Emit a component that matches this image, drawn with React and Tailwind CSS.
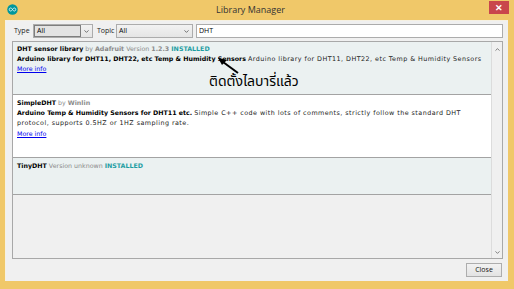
import { ChevronDown, ChevronUp } from 'lucide-react'

const listFont = { fontFamily: '"DejaVu Sans", Verdana, sans-serif' }
const uiFont = { fontFamily: '"Open Sans", "Noto Sans", sans-serif' }

function ArduinoLogo() {
  return (
    <svg width="11" height="11" viewBox="0 0 22 22">
      <circle cx="11" cy="11" r="10.5" fill="#00979c" />
      <path d="M4.5 11c0-2 1.3-3 2.8-3s2.6 1.2 3.7 3c1.1 1.8 2.2 3 3.7 3s2.8-1 2.8-3-1.3-3-2.8-3-2.6 1.2-3.7 3c-1.1 1.8-2.2 3-3.7 3S4.5 13 4.5 11z" fill="none" stroke="#fff" strokeWidth="1.6" />
    </svg>
  )
}

function Select({ value, width, focused }) {
  return (
    <div className={`h-[14px] ${width} border border-[#acacac] bg-gradient-to-b from-[#f2f2f2] to-[#e5e5e5] flex items-center`}>
      <div className={`flex-1 h-full flex items-center pl-[2px] text-[7px] text-black ${focused ? 'border border-[#7e7e7e] bg-[#e3e3e3]' : ''}`}>{value}</div>
      <div className="w-[11px] flex items-center justify-center text-[#444]">
        <ChevronDown size={7} strokeWidth={2.5} />
      </div>
    </div>
  )
}

// plain description text: wider, like hinted Verdana
function Plain({ children }) {
  return <span className="text-[6.4px] tracking-[0.45px] text-[#222]">{children}</span>
}

function App() {
  return (
    <div className="relative w-[514px] h-[289px] bg-[#f0c869] flex flex-col overflow-hidden">
      {/* title bar */}
      <div className="h-[20px] flex items-center relative shrink-0">
        <div className="ml-[7px] pb-[1px]"><ArduinoLogo /></div>
        <div className="flex-1 text-center text-[9px] text-[#333] pb-[1px] pr-[6px]" style={uiFont}>Library Manager</div>
        <div className="self-start mr-[5px] mt-[1px] w-[20px] h-[13px] bg-[#c9464c] flex items-center justify-center text-white text-[9px] font-bold" style={uiFont}>✕</div>
      </div>

      {/* content */}
      <div className="flex-1 ml-[5px] mr-[6px] mb-[8px] bg-[#f0f0f0] border-l border-t border-[#f6f1e2] flex flex-col pl-[6px] pr-[5px] pt-[3px] pb-[4px]" style={uiFont}>
        <div className="h-[14px] flex items-center">
          <span className="ml-[2px] w-[19px] text-[7px] text-[#222]">Type</span>
          <Select value="All" width="w-[60px]" focused />
          <span className="ml-[4px] w-[19px] text-[7px] text-[#222]">Topic</span>
          <Select value="All" width="w-[77px]" />
          <div className="ml-[3px] flex-1 h-[14px] bg-white border border-[#acacac] flex items-center pl-[2px] text-[7px] text-black">DHT</div>
        </div>

        <div className="mt-[3px] h-[218px] border border-[#a8a8a8] flex bg-[#f0f0f0]">
          <div className="flex-1 flex flex-col text-[6.3px] leading-[9.6px] overflow-hidden" style={listFont}>
            <div className="h-[53px] bg-[#ebf1f1] border-b border-[#a3a3a3] pl-[4px] pt-[2px] text-[#222]">
              <div className="whitespace-nowrap">
                <b className="text-black">DHT sensor library</b>{' '}
                <span className="text-[#8a8a8a]">by <b>Adafruit</b> Version <b>1.2.3</b></span>{' '}
                <b className="text-[#1f9ea3]">INSTALLED</b>
              </div>
              <div className="whitespace-nowrap">
                <b className="text-black">Arduino library for DHT11, DHT22, etc Temp &amp; Humidity Sensors</b>{' '}
                <Plain>Arduino library for DHT11, DHT22, etc Temp &amp; Humidity Sensors</Plain>
              </div>
              <div><span className="text-[#0000ee] underline">More info</span></div>
            </div>
            <div className="h-[63px] bg-white border-b border-[#a3a3a3] pl-[4px] pt-[3px] text-[#222]">
              <div className="whitespace-nowrap">
                <b className="text-black">SimpleDHT</b>{' '}
                <span className="text-[#8a8a8a]">by <b>Winlin</b></span>
              </div>
              <div className="whitespace-nowrap">
                <b className="text-black">Arduino Temp &amp; Humidity Sensors for DHT11 etc.</b>{' '}
                <Plain>Simple C++ code with lots of comments, strictly follow the standard DHT</Plain>
              </div>
              <div className="whitespace-nowrap"><Plain>protocol, supports 0.5HZ or 1HZ sampling rate.</Plain></div>
              <div><span className="text-[#0000ee] underline">More info</span></div>
            </div>
            <div className="h-[37px] bg-[#ebf1f1] border-b border-[#a3a3a3] pl-[4px] pt-[3px]">
              <div className="whitespace-nowrap">
                <b className="text-black">TinyDHT</b>{' '}
                <span className="text-[#8a8a8a]">Version unknown</span>{' '}
                <b className="text-[#1f9ea3]">INSTALLED</b>
              </div>
            </div>
          </div>
          <div className="w-[11px] border-l border-[#dcdcdc] bg-[#f0f0f0] flex flex-col items-center justify-between pt-[4px] pb-[2px] text-[#555]">
            <ChevronUp size={7} strokeWidth={2.5} />
            <ChevronDown size={7} strokeWidth={2.5} />
          </div>
        </div>

        <div className="mt-[4px] h-[14px] flex justify-end">
          <div className="w-[36px] h-[14px] mr-[1px] border border-[#adadad] bg-gradient-to-b from-[#f2f2f2] to-[#e3e3e3] flex items-center justify-center text-[7px] text-[#111]">Close</div>
        </div>
      </div>

      {/* annotation */}
      <svg className="absolute left-[214px] top-[54px]" width="30" height="24" viewBox="0 0 30 24">
        <line x1="24" y1="19" x2="9" y2="8" stroke="#000" strokeWidth="2" />
        <polygon points="4,4 13,6 8,11" fill="#000" />
      </svg>
      <div className="absolute left-[209px] top-[73px] text-[14px] leading-[18px] text-black whitespace-nowrap" style={{ fontFamily: '"Noto Sans Thai", Tahoma, "Noto Sans", sans-serif' }}>
        ติดตั้งไลบารี่แล้ว
      </div>
    </div>
  )
}

export default App
